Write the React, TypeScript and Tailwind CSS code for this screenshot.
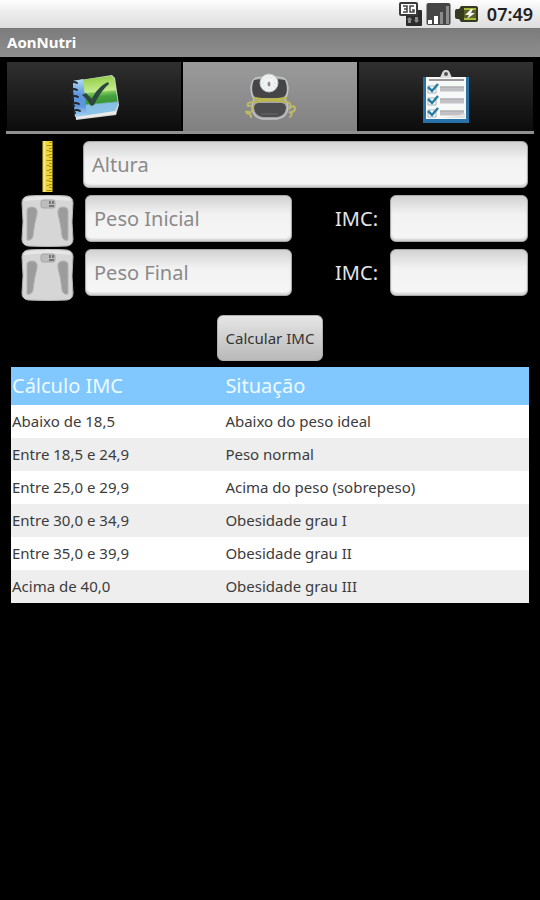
import React, { useState } from 'react';

const ranges = [
  { range: 'Abaixo de 18,5', status: 'Abaixo do peso ideal' },
  { range: 'Entre 18,5 e 24,9', status: 'Peso normal' },
  { range: 'Entre 25,0 e 29,9', status: 'Acima do peso (sobrepeso)' },
  { range: 'Entre 30,0 e 34,9', status: 'Obesidade grau I' },
  { range: 'Entre 35,0 e 39,9', status: 'Obesidade grau II' },
  { range: 'Acima de 40,0', status: 'Obesidade grau III' },
];

const fieldClass =
  'h-[47px] w-full min-w-0 rounded-md border border-[#a8a8a8] bg-linear-to-b from-[#d2d2d2] via-[#f2f2f2] via-40% to-[#f6f6f6] px-2 text-xl text-gray-800 shadow-[inset_0_-2px_2px_#d0d0d0] outline-none placeholder:text-[#8a8a8a]';

function NetworkIcon() {
  return (
    <svg className="h-6 w-[23px]" viewBox="0 0 23 24">
      <rect x="7" y="8" width="16" height="16" rx="1" fill="#2b2b2b" />
      <rect x="1" y="1" width="17" height="12" rx="1" fill="#fff" stroke="#3a3a3a" strokeWidth="2" />
      <path d="M4 4h4v6H4M5 7h3M15 4h-4v6h4V8h-2" fill="none" stroke="#444" strokeWidth="1.5" />
      <path d="M9 16h3v5H9zM16 15h3v5h-3z" fill="#8a8a8a" />
      <path d="M8 18l2.5-3 2.5 3M15 18l2.5 3 2.5-3" fill="none" stroke="#6b6b6b" />
    </svg>
  );
}

function SignalIcon() {
  return (
    <svg className="h-6 w-[25px]" viewBox="0 0 25 24">
      <rect x="0.5" y="1" width="24" height="22" rx="2" fill="#454545" />
      <path d="M14 10h3v12h-3zM20 4h3v18h-3z" fill="#8b8b8b" />
      <path d="M2 18h4v4H2zM8 14h4v8H8z" fill="#fff" />
    </svg>
  );
}

function BatteryIcon() {
  return (
    <svg className="h-[18px] w-6" viewBox="0 0 24 18">
      <path d="M6 1h15a2 2 0 0 1 2 2v12a2 2 0 0 1-2 2H6l-2-3H2a2 2 0 0 1-2-2V6a2 2 0 0 1 2-2h2z" fill="#353a20" />
      <path d="M9 3h12v2H9zM9 13h12v2H9z" fill="#a8b83a" />
      <path d="M9 5h12v8H9z" fill="#59612b" />
      <path d="M16 4l-6 6h4l-2 4 8-6h-4l2-4z" fill="#f5f5ee" />
    </svg>
  );
}

function NotebookIcon() {
  return (
    <svg className="h-[52px] w-[52px]" viewBox="0 0 52 52">
      <defs>
        <linearGradient id="cover" x1="0" y1="0" x2="0.1" y2="1">
          <stop offset="0" stopColor="#84c440" />
          <stop offset="0.2" stopColor="#a6da62" />
          <stop offset="0.42" stopColor="#c3ea8c" />
          <stop offset="0.46" stopColor="#7cc65a" />
          <stop offset="0.56" stopColor="#45a23e" />
          <stop offset="0.7" stopColor="#3d9638" />
          <stop offset="0.74" stopColor="#86c0e4" />
          <stop offset="1" stopColor="#8fc4ea" />
        </linearGradient>
        <linearGradient id="binding" x1="0" y1="0" x2="0" y2="1">
          <stop offset="0" stopColor="#b5dcf4" />
          <stop offset="0.4" stopColor="#5f97de" />
          <stop offset="0.7" stopColor="#5c94dc" />
          <stop offset="1" stopColor="#a9d6f4" />
        </linearGradient>
      </defs>
      <path d="M6 10L44 4l3 3 4 27-3 10-40 5z" fill="#cfd4d2" />
      <path d="M5 10l38-5 3 2 4 26-3 7-40 6z" fill="url(#cover)" />
      <path d="M5 10l10-2 4 36-12 2z" fill="url(#binding)" />
      <path d="M8 46l40-6v3L8 48z" fill="#e9eceb" />
      <g fill="none" stroke="#20272c" strokeWidth="2" strokeLinecap="round">
        <path d="M4 14c-3-3 2-4 5-2" />
        <path d="M4 21c-3-3 2-4 5-2" />
        <path d="M5 28c-3-3 2-4 5-2" />
        <path d="M6 35c-3-3 2-4 5-2" />
        <path d="M7 42c-3-3 2-4 5-2" />
      </g>
      <path d="M14 24l4-2 6 6c3-7 8-13 16-17l1 2c-7 6-11 13-15 21l-3 1c-2-4-5-8-9-11z" fill="#2c483c" />
    </svg>
  );
}

function BodyScaleIcon() {
  return (
    <svg className="h-[52px] w-[54px]" viewBox="0 0 54 52">
      <path
        d="M13 7q14-3 27 0 4 2 5 9 0 7-3 12 3 4 3 8-1 11-11 12H20Q10 47 9 36q0-4 2-8-3-5-3-12 1-7 5-9z"
        fill="#a4a4a6"
        stroke="#c4c4c6"
        strokeWidth="1.5"
      />
      <path d="M11 9q15-3 31 0 3 8 1 14-2 4-6 4H15q-4 0-5-4-2-7 1-14z" fill="#454547" />
      <path d="M15 32h24q4 1 4 5-1 8-9 9H20q-8-1-9-9 0-4 4-5z" fill="#4d4d50" />
      <path d="M18 43h17" stroke="#68686b" />
      <g fill="none" strokeLinecap="round">
        <path d="M11 27q15 3 32 0M11 31q15-3 32 0" stroke="#bcb948" strokeWidth="2" />
        <path d="M11 31q-8 0-6 4 6-1 4 5-4 5-6 1 4-2 5 5" stroke="#bdb968" strokeWidth="2" />
        <path d="M43 31q6 0 4 6 5-4 5 1-1 4-6 3 5 2 1 5" stroke="#bdb968" strokeWidth="2" />
      </g>
      <circle cx="26" cy="12" r="9" fill="#f2f3f3" stroke="#c4c7c7" />
      <circle cx="26" cy="12" r="6" fill="none" stroke="#dde1e1" strokeWidth="2" strokeDasharray="1 2" />
      <ellipse cx="26" cy="13" rx="1.5" ry="2.5" fill="#8c8c8c" />
    </svg>
  );
}

function ClipboardIcon() {
  return (
    <svg className="h-[56px] w-[48px]" viewBox="0 0 48 56">
      <path d="M1 8h46v46H1z" fill="#2872a8" />
      <path d="M4 8h40v42H4z" fill="#f7f8f8" />
      <path d="M17 9c3-1 2-8 7-8s4 7 7 8z" fill="#ddd" />
      <circle cx="24" cy="5" r="2" fill="#555" />
      <path d="M7 11h35" stroke="#777" strokeWidth="1.6" />
      <g fill="none" stroke="#c2c2c6" strokeWidth="5">
        <path d="M18 20h24M18 32h24M18 44h24" />
      </g>
      <g fill="none" stroke="#a4a4a8">
        <path d="M18 18h24M18 30h24M18 42h24" />
      </g>
      <path d="M20 49l15-2 8-3v5z" fill="#e2e2e2" />
      <g fill="#fff" stroke="#a5b4bc">
        <path d="M6 17h8v7H6zM6 29h8v7H6zM6 41h8v7H6z" />
      </g>
      <g fill="none" stroke="#287fa4" strokeWidth="2.5">
        <path d="M6 18l4 4 6-7M6 30l4 4 6-7M6 42l4 4 6-7" />
      </g>
    </svg>
  );
}

function RulerIcon() {
  return (
    <svg className="h-[51px] w-[11px]" viewBox="0 0 11 51">
      <rect x="0.5" width="10" height="51" fill="#efd638" />
      <path d="M2.5 0v51" stroke="#f8eb8c" strokeWidth="1.5" />
      <path d="M8.5 1v50" stroke="#a89224" strokeWidth="3" strokeDasharray="1 2" />
      <path d="M6 4v46" stroke="#a89224" strokeWidth="3" strokeDasharray="1 4" />
    </svg>
  );
}

function ScaleIcon() {
  return (
    <svg className="h-[52px] w-[53px]" viewBox="0 0 53 52">
      <path d="M7 1q20-2 39 0 6 1 6 7-2 20 0 36 0 6-6 7-19 1-39 0-6-1-6-7 2-17 0-36 0-6 6-7z" fill="#d6d6d6" stroke="#b4b4b4" />
      <path d="M8 2q18-2 37 0 5 1 5 4-24-3-47 0 0-3 5-4z" fill="#e6e6e6" />
      <path d="M6 16q0-4 5-4 6 0 5 7-3 11-4 22-1 5-6 4z" fill="#9c9c9c" stroke="#b2b2b2" />
      <path d="M47 16q0-4-5-4-6 0-5 7 3 11 4 22 1 5 6 4z" fill="#9c9c9c" stroke="#b2b2b2" />
      <rect x="20" y="5" width="14" height="8" rx="2" fill="#bcbcbc" stroke="#a6a6a6" />
      <path d="M28 6h2v3h-2zM31 6h2v3h-2zM28 10h5v2h-5z" fill="#777" />
    </svg>
  );
}

const tabs = [
  { label: 'Agenda', Icon: NotebookIcon },
  { label: 'IMC', Icon: BodyScaleIcon },
  { label: 'Questionário', Icon: ClipboardIcon },
];

interface WeightRowProps {
  id: string;
  label: string;
  value: string;
  result: string;
  onChange: (value: string) => void;
}

function WeightRow({ id, label, value, result, onChange }: WeightRowProps) {
  return (
    <div className="flex h-[52px] items-start">
      <div className="mr-[11px] shrink-0">
        <ScaleIcon />
      </div>
      <div className="min-w-0 flex-3">
        <input
          id={id}
          aria-label={label}
          placeholder={label}
          value={value}
          onChange={(e) => onChange(e.target.value)}
          className={fieldClass}
        />
      </div>
      <label htmlFor={`${id}-imc`} className="w-[98px] shrink-0 pr-3 text-right text-xl leading-[48px] text-[#e4e4e4]">
        IMC:
      </label>
      <div className="min-w-0 flex-2">
        <input id={`${id}-imc`} readOnly value={result} className={fieldClass} />
      </div>
    </div>
  );
}

export default function App() {
  const [activeTab, setActiveTab] = useState(1);
  const [height, setHeight] = useState('');
  const [initial, setInitial] = useState('');
  const [final, setFinal] = useState('');
  const [results, setResults] = useState(['', '']);

  const getImc = (weight: string) => {
    const h = parseFloat(height.replace(',', '.'));
    const w = parseFloat(weight.replace(',', '.'));
    if (!h || !w) return '';
    return (w / (h * h)).toFixed(1).replace('.', ',');
  };

  return (
    <div className="min-h-screen bg-black font-['Noto_Sans','Open_Sans',sans-serif]">
      {/* Status bar */}
      <div className="flex h-7 items-center justify-end bg-linear-to-b from-white via-[#eeeeee] via-40% to-[#dedede] pr-[7px]">
        <div className="flex items-center gap-1">
          <NetworkIcon />
          <SignalIcon />
          <BatteryIcon />
        </div>
        <span className="ml-2 text-lg leading-7 font-semibold text-[#222]">07:49</span>
      </div>

      {/* Title bar */}
      <h1 className="h-[29px] border-t border-[#777] bg-linear-to-b from-[#7c7c7c] to-[#8e8e8e] px-[7px] text-[15px] leading-[26px] font-bold text-white">
        AonNutri
      </h1>

      {/* Tabs */}
      <div role="tablist" className="mx-[6px] mt-[5px] grid grid-cols-3 border-b-[3px] border-[#909090]">
        {tabs.map(({ label, Icon }, i) => (
          <button
            key={label}
            role="tab"
            aria-label={label}
            aria-selected={activeTab === i}
            onClick={() => setActiveTab(i)}
            className={`flex h-[69px] items-center justify-center border-x border-black ${
              activeTab === i
                ? 'bg-linear-to-b from-[#9b9b9b] to-[#818181]'
                : 'bg-linear-to-b from-[#303030] to-[#0c0c0c]'
            }`}
          >
            <Icon />
          </button>
        ))}
      </div>

      {/* Form */}
      <form
        className="pt-[7px]"
        onSubmit={(e) => {
          e.preventDefault();
          setResults([getImc(initial), getImc(final)]);
        }}
      >
        <div className="flex flex-col gap-[2px] pr-3 pl-[21px]">
          <div className="flex h-[52px] items-start">
            <div className="mr-[9px] flex w-[53px] shrink-0 justify-center">
              <RulerIcon />
            </div>
            <input
              aria-label="Altura"
              placeholder="Altura"
              value={height}
              onChange={(e) => setHeight(e.target.value)}
              className={fieldClass}
            />
          </div>
          <WeightRow id="inicial" label="Peso Inicial" value={initial} result={results[0]} onChange={setInitial} />
          <WeightRow id="final" label="Peso Final" value={final} result={results[1]} onChange={setFinal} />
        </div>
        <div className="mt-[14px] flex justify-center">
          <button
            type="submit"
            className="h-[46px] rounded-md border border-[#b0b0b0] bg-linear-to-b from-[#e6e6e6] via-[#cfcfcf] to-[#b9b9b9] px-2 text-[15px] text-[#333]"
          >
            Calcular IMC
          </button>
        </div>
      </form>

      {/* IMC ranges */}
      <div className="px-[11px] pt-[6px]">
        <table className="w-full table-fixed border-collapse text-left text-[15px] text-[#3c3c3c]">
          <thead>
            <tr className="h-[38px] bg-[#80c8ff] text-xl text-[#effaff]">
              <th className="w-[41%] p-0 pl-px font-normal">Cálculo IMC</th>
              <th className="p-0 pl-[2px] font-normal">Situação</th>
            </tr>
          </thead>
          <tbody>
            {ranges.map((row) => (
              <tr key={row.range} className="h-[33px] odd:bg-white even:bg-[#eeeeee]">
                <td className="p-0 pl-px">{row.range}</td>
                <td className="p-0 pl-[2px]">{row.status}</td>
              </tr>
            ))}
          </tbody>
        </table>
      </div>
    </div>
  );
}
